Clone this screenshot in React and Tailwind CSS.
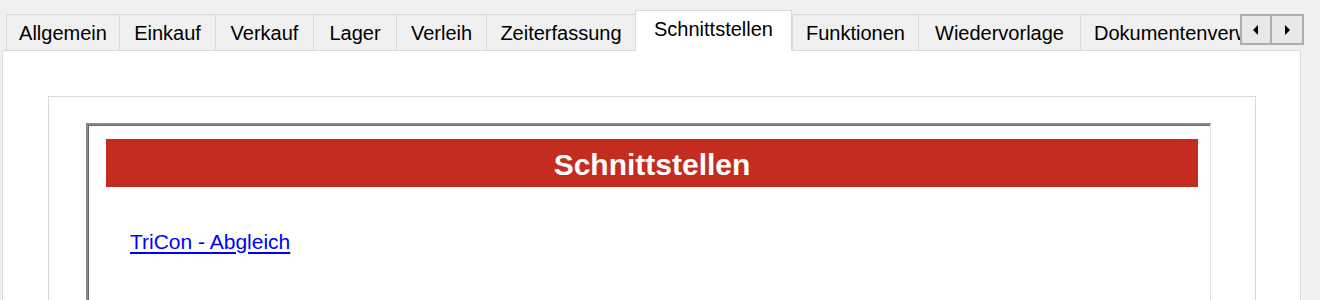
import React from 'react';

const tabs = [
  { label: 'Allgemein', w: 'w-[113px]' },
  { label: 'Einkauf', w: 'w-[96px]' },
  { label: 'Verkauf', w: 'w-[98px]' },
  { label: 'Lager', w: 'w-[83px]' },
  { label: 'Verleih', w: 'w-[90px]' },
  { label: 'Zeiterfassung', w: 'w-[149px]' },
  { label: 'Schnittstellen', w: 'w-[157px]', active: true },
  { label: 'Funktionen', w: 'w-[126px]' },
  { label: 'Wiedervorlage', w: 'w-[162px]' },
  { label: 'Dokumentenverwaltung', w: 'w-[240px]' },
];

export default function App() {
  return (
    <div className="w-[1320px] h-[300px] overflow-hidden bg-[#f0f0f0] font-['Liberation_Sans',Arial,sans-serif] text-black">
      {/* Tab-Leiste */}
      <div className="flex items-start h-[50px]">
        <div className="flex items-end ml-[6px] w-[1234px] h-[51px] overflow-hidden">
          {tabs.map(t => (
            <div
              key={t.label}
              className={`${t.w} shrink-0 flex items-center justify-center whitespace-nowrap text-[20px] border-[#d9d9d9] ${
                t.active
                  ? 'h-[41px] bg-white border-l border-t border-r relative z-10 pb-[4px]'
                  : 'h-[37px] bg-[#f0f0f0] border-l border-t border-b'
              } ${t.label === 'Dokumentenverwaltung' ? 'justify-start pl-[13px]' : ''}`}
            >
              {t.label}
            </div>
          ))}
        </div>
        <div className="flex mt-[14px]">
          <div className="w-[32px] h-[31px] bg-[#e8e8e8] border-2 border-[#adadad] flex items-center justify-center">
            <svg width="6" height="10" viewBox="0 0 6 10"><path d="M5 0 L0 5 L5 10 Z" fill="#000" /></svg>
          </div>
          <div className="w-[32px] h-[31px] bg-[#e8e8e8] border-2 border-l-0 border-[#adadad] flex items-center justify-center">
            <svg width="6" height="10" viewBox="0 0 6 10"><path d="M1 0 L6 5 L1 10 Z" fill="#000" /></svg>
          </div>
        </div>
      </div>

      {/* Panel */}
      <div className="ml-[2px] w-[1299px] h-[260px] bg-white border border-[#dcdcdc] pl-[45px] pr-[44px] pt-[45px]">
        <div className="h-[300px] border border-[#dadada] pl-[37px] pr-[44px] pt-[26px]">
          <div className="h-[300px] border-t-2 border-l-2 border-r border-t-[#8a8a8a] border-l-[#8a8a8a] border-r-[#e3e3e3] shadow-[inset_1px_1px_0_#696969] pl-[18px] pr-[12px] pt-[14px]">
            <div className="h-[48px] bg-[#c52c20] flex items-center justify-center pt-[3px] text-white font-bold text-[30px]">
              Schnittstellen
            </div>
            <div className="pl-[24px] pt-[39px]">
              <a href="#" className="text-[21px] text-[#0000ff] underline underline-offset-[3px]">
                TriCon - Abgleich
              </a>
            </div>
          </div>
        </div>
      </div>
    </div>
  );
}
